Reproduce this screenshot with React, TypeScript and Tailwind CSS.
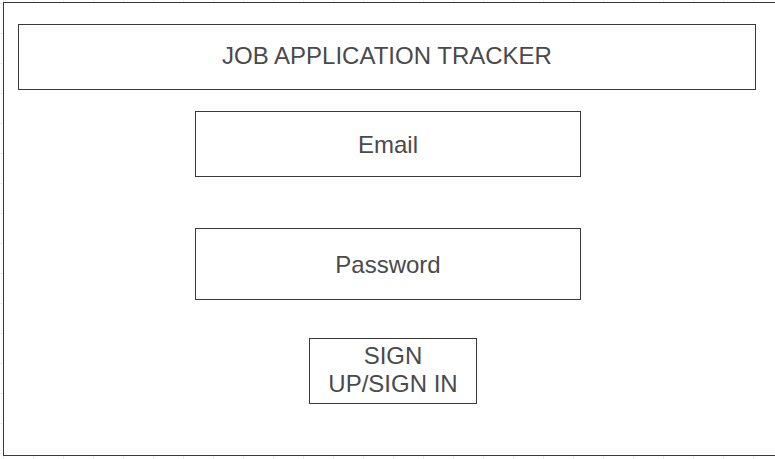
export default function App() {
  return (
    <div className="h-[459px] w-[775px] overflow-hidden bg-white bg-[linear-gradient(to_right,#ececec_1px,transparent_1px),linear-gradient(to_bottom,#ececec_1px,transparent_1px)] bg-[size:30px_30px] bg-[position:3px_3px] pl-[3px] pt-[2px] font-['Liberation_Sans',Arial,sans-serif] text-[#4a4a4a]">
      <div className="flex h-[454px] w-[790px] flex-col border border-[#3a3a3a] bg-white">
        <div className="ml-[14px] mt-[21px] flex h-[66px] w-[738px] items-center justify-center border border-[#3a3a3a] pb-[2px] text-[24px]">
          JOB APPLICATION TRACKER
        </div>
        <div className="ml-[191px] mt-[21px] flex h-[66px] w-[386px] items-center justify-center border border-[#3a3a3a] pt-[1px] text-[24px]">
          Email
        </div>
        <div className="ml-[191px] mt-[51px] flex h-[72px] w-[386px] items-center justify-center border border-[#3a3a3a] pt-[2px] text-[24px]">
          Password
        </div>
        <div className="ml-[305px] mt-[38px] flex h-[66px] w-[168px] items-center justify-center border border-[#3a3a3a] pb-[2px] text-center text-[24px] leading-[28px]">
          SIGN
          <br />
          UP/SIGN IN
        </div>
      </div>
    </div>
  );
}
